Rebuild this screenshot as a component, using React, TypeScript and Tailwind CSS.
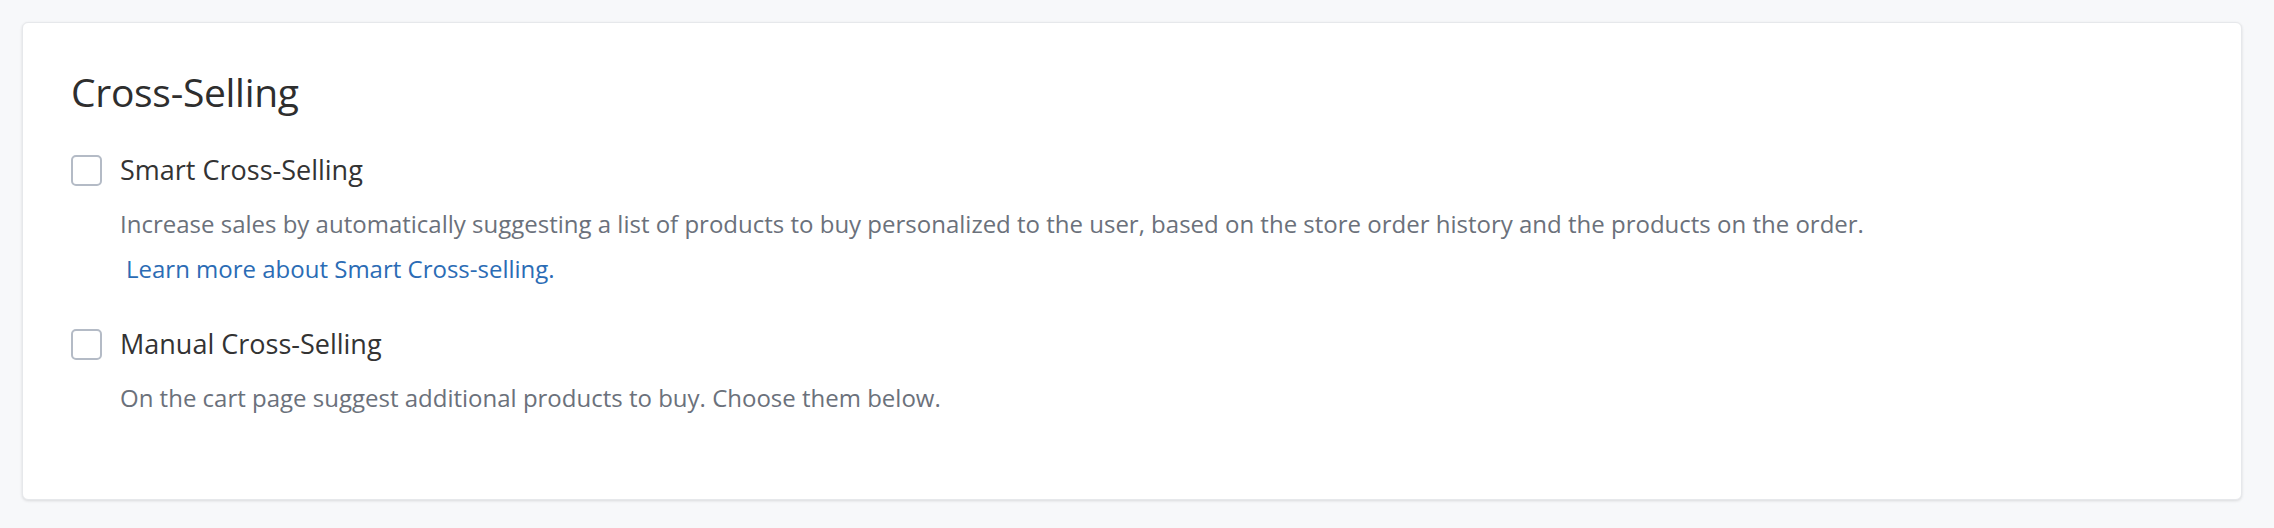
import React, { useState } from 'react';

function Checkbox({ checked, onToggle }: { checked: boolean; onToggle: () => void }) {
  return (
    <button
      type="button"
      onClick={onToggle}
      className="h-[31px] w-[31px] shrink-0 rounded-[5px] border-2 border-[#b4bbc6] bg-white"
    >
      {checked && <span className="block h-full w-full rounded-[3px] bg-[#2b6cb5]" />}
    </button>
  );
}

export default function App() {
  const [smart, setSmart] = useState(false);
  const [manual, setManual] = useState(false);

  return (
    <div className="min-h-screen bg-[#f7f8fa] pt-[22px] pl-[22px] pr-[32px] pb-[28px] font-['Open_Sans',sans-serif]">
      <div className="h-[478px] rounded-[6px] border border-[#e6e8eb] bg-white px-[48px] pt-[45px] shadow-[0_1px_3px_rgba(0,0,0,0.12)]">
        <h2 className="text-[39px] font-medium leading-[48px] tracking-[-0.3px] text-[#2e2e2e]">Cross-Selling</h2>

        <label className="mt-[36px] flex items-center gap-[18px] cursor-pointer">
          <Checkbox checked={smart} onToggle={() => setSmart(!smart)} />
          <span className="text-[27px] leading-[36px] text-[#333]">Smart Cross-Selling</span>
        </label>
        <div className="pl-[49px]">
          <p className="mt-[19px] text-[24px] leading-[34px] text-[#6b717b]">
            Increase sales by automatically suggesting a list of products to buy personalized to the user, based on the store order history and the products on the order.
          </p>
          <p className="mt-[11px] text-[24px] leading-[34px]">
            <a href="#" className="ml-[6px] text-[#2b6cb5]">Learn more about Smart Cross-selling.</a>
          </p>
        </div>

        <label className="mt-[40px] flex items-center gap-[18px] cursor-pointer">
          <Checkbox checked={manual} onToggle={() => setManual(!manual)} />
          <span className="text-[27px] leading-[36px] text-[#333]">Manual Cross-Selling</span>
        </label>
        <div className="pl-[49px]">
          <p className="mt-[19px] text-[24px] leading-[34px] text-[#6b717b]">
            On the cart page suggest additional products to buy. Choose them below.
          </p>
        </div>
      </div>
    </div>
  );
}
